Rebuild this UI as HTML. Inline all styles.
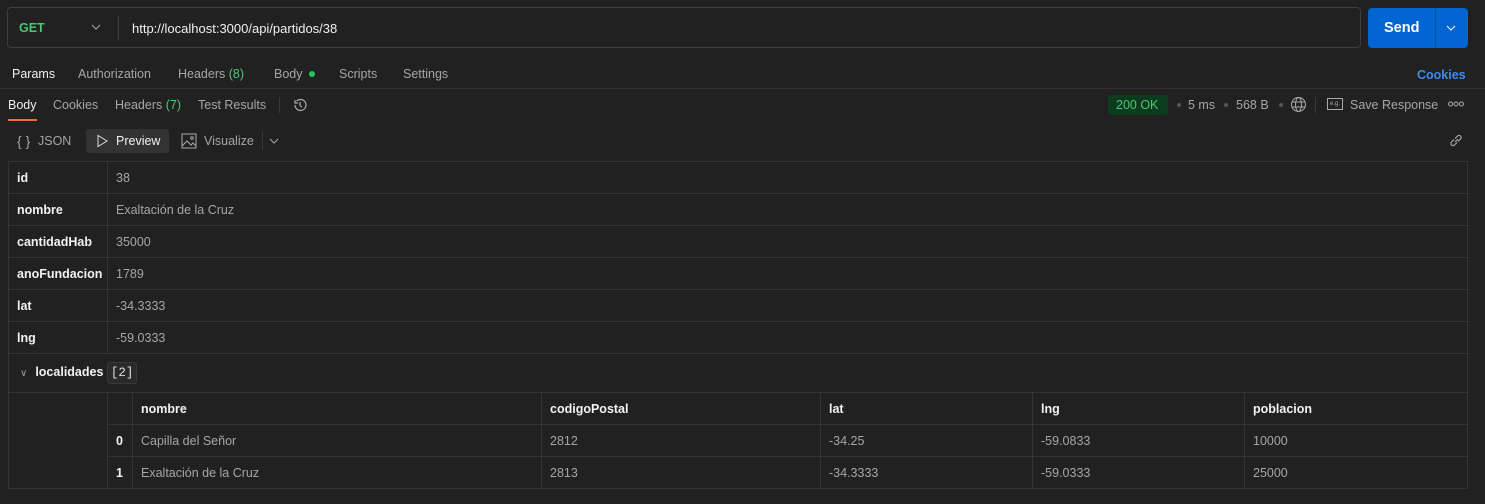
<!DOCTYPE html>
<html><head><meta charset="utf-8"><style>
*{box-sizing:border-box;margin:0;padding:0}
body{width:1485px;height:504px;background:#212121;font-family:"Liberation Sans",sans-serif;font-size:12.5px;color:#a6a6a6;position:relative;overflow:hidden}
.a{position:absolute;white-space:nowrap}
.w{color:#f0f0f0}
.b{font-weight:bold;color:#f2f2f2}
.g{color:#4ec473}
table{border-collapse:collapse;position:absolute;table-layout:fixed}
td{border:1px solid #343434;padding:0 8px;height:32px;white-space:nowrap;overflow:hidden}
</style></head><body>
<div class="a" style="left:7px;top:7px;width:1354px;height:41px;border:1px solid #3f3f3f;border-radius:4px"></div>
<div class="a b" style="left:19px;top:21px;color:#4ec473;font-size:12.5px">GET</div>
<svg class="a" style="left:91px;top:23px" width="10" height="8"><path d="M1 2l4 4 4-4" stroke="#aaa" fill="none"/></svg>
<div class="a" style="left:118px;top:16px;width:1px;height:24px;background:#3f3f3f"></div>
<div class="a w" style="left:132px;top:21px;font-size:13px">http://localhost:3000/api/partidos/38</div>
<div class="a" style="left:1368px;top:8px;width:100px;height:40px;background:#0265d2;border-radius:4px"></div>
<div class="a" style="left:1435px;top:8px;width:1px;height:40px;background:#0b4f9c"></div>
<div class="a" style="left:1384px;top:20px;color:#fff;font-weight:bold;font-size:14.5px">Send</div>
<svg class="a" style="left:1446px;top:24px" width="10" height="8"><path d="M1 2l4 4 4-4" stroke="#fff" fill="none"/></svg>

<div class="a w" style="left:12px;top:67px">Params</div>
<div class="a" style="left:78px;top:67px">Authorization</div>
<div class="a" style="left:178px;top:67px">Headers <span class="g">(8)</span></div>
<div class="a" style="left:274px;top:67px">Body</div>
<div class="a" style="left:309px;top:71px;width:6px;height:6px;border-radius:50%;background:#27c45c"></div>
<div class="a" style="left:339px;top:67px">Scripts</div>
<div class="a" style="left:403px;top:67px">Settings</div>
<div class="a" style="left:1417px;top:68px;color:#3d8cf0;font-weight:bold">Cookies</div>
<div class="a" style="left:0;top:88px;width:1485px;height:1px;background:#303030"></div>

<div class="a w" style="left:8px;top:98px">Body</div>
<div class="a" style="left:8px;top:119px;width:29px;height:2px;background:#f26b3a"></div>
<div class="a" style="left:53px;top:98px">Cookies</div>
<div class="a" style="left:115px;top:98px">Headers <span class="g">(7)</span></div>
<div class="a" style="left:198px;top:98px">Test Results</div>
<div class="a" style="left:279px;top:97px;width:1px;height:16px;background:#3a3a3a"></div>
<svg class="a" style="left:292px;top:97px" width="16" height="16"><path d="M3 8a5.5 5.5 0 1 0 1.6-3.9M3 3v3h3M8 5v3.5l2 1.5" stroke="#aaa" fill="none" stroke-width="1.2"/></svg>
<div class="a" style="left:1108px;top:95px;width:60px;height:20px;background:#0c3b1e;border-radius:3px"></div>
<div class="a" style="left:1116px;top:98px;color:#4ec473">200 OK</div>
<div class="a" style="left:1177px;top:103px;width:4px;height:4px;border-radius:50%;background:#555"></div>
<div class="a" style="left:1188px;top:98px">5 ms</div>
<div class="a" style="left:1224px;top:103px;width:4px;height:4px;border-radius:50%;background:#555"></div>
<div class="a" style="left:1236px;top:98px">568 B</div>
<div class="a" style="left:1279px;top:103px;width:4px;height:4px;border-radius:50%;background:#555"></div>
<svg class="a" style="left:1290px;top:96px" width="17" height="17"><circle cx="8.5" cy="8.5" r="7" stroke="#aaa" fill="none"/><ellipse cx="8.5" cy="8.5" rx="3" ry="7" stroke="#aaa" fill="none"/><path d="M1.5 6h14M1.5 11h14" stroke="#aaa"/></svg>
<div class="a" style="left:1315px;top:97px;width:1px;height:16px;background:#3a3a3a"></div>
<div class="a" style="left:1327px;top:98px;width:16px;height:12px;border:1px solid #aaa;font-size:6px;color:#aaa;text-align:center;line-height:10px">e.g.</div>
<div class="a" style="left:1350px;top:98px">Save Response</div>
<svg class="a" style="left:1448px;top:101px" width="16" height="6"><circle cx="2.5" cy="3" r="2" stroke="#aaa" fill="none"/><circle cx="8" cy="3" r="2" stroke="#aaa" fill="none"/><circle cx="13.5" cy="3" r="2" stroke="#aaa" fill="none"/></svg>

<div class="a" style="left:17px;top:133px;font-size:14px">{ }</div>
<div class="a" style="left:38px;top:134px">JSON</div>
<div class="a" style="left:86px;top:129px;width:83px;height:24px;background:#333;border-radius:3px"></div>
<svg class="a" style="left:96px;top:134px" width="12" height="14"><path d="M2 1.5v11l9-5.5z" stroke="#ddd" fill="none"/></svg>
<div class="a w" style="left:116px;top:134px">Preview</div>
<svg class="a" style="left:181px;top:133px" width="16" height="16"><rect x="1" y="1" width="14" height="14" stroke="#aaa" fill="none"/><path d="M1 13l5-5 4 4 2-2 3 3" stroke="#aaa" fill="none"/><circle cx="11" cy="5" r="1.3" stroke="#aaa" fill="none"/></svg>
<div class="a" style="left:204px;top:134px">Visualize</div>
<div class="a" style="left:262px;top:132px;width:1px;height:18px;background:#3a3a3a"></div>
<svg class="a" style="left:269px;top:137px" width="10" height="8"><path d="M1 2l4 4 4-4" stroke="#aaa" fill="none"/></svg>
<svg class="a" style="left:1448px;top:133px" width="16" height="16"><path d="M7 9l3-3M6 6.5l-2.5 2.5a2.1 2.1 0 0 0 3 3L9 9.5M7 5.5l2.5-2.5a2.1 2.1 0 0 1 3 3L10 8.5" stroke="#aaa" fill="none" stroke-width="1.2"/></svg>

<table style="left:8px;top:161px;width:1460px">
<colgroup><col style="width:99px"><col></colgroup>
<tr><td class="b">id</td><td>38</td></tr>
<tr><td class="b">nombre</td><td>Exaltación de la Cruz</td></tr>
<tr><td class="b">cantidadHab</td><td>35000</td></tr>
<tr><td class="b">anoFundacion</td><td>1789</td></tr>
<tr><td class="b">lat</td><td>-34.3333</td></tr>
<tr><td class="b">lng</td><td>-59.0333</td></tr>
<tr><td colspan="2" style="height:39px"><span style="color:#999;font-size:10px;margin-left:3px">&#8744;</span><span class="b" style="margin-left:8px">localidades</span> <span style="display:inline-block;border:1px solid #3a3a3a;background:#2a2a2a;border-radius:3px;padding:3px 3px;color:#ddd;font-family:'Liberation Mono',monospace">[2]</span></td></tr>
</table>
<table style="left:107px;top:392px;width:1361px">
<colgroup><col style="width:25px"><col style="width:409px"><col style="width:279px"><col style="width:212px"><col style="width:212px"><col></colgroup>
<tr><td></td><td class="b">nombre</td><td class="b">codigoPostal</td><td class="b">lat</td><td class="b">lng</td><td class="b">poblacion</td></tr>
<tr><td class="b">0</td><td>Capilla del Señor</td><td>2812</td><td>-34.25</td><td>-59.0833</td><td>10000</td></tr>
<tr><td class="b">1</td><td>Exaltación de la Cruz</td><td>2813</td><td>-34.3333</td><td>-59.0333</td><td>25000</td></tr>
</table>
<div class="a" style="left:8px;top:392px;width:1px;height:97px;background:#343434"></div>
<div class="a" style="left:8px;top:488px;width:100px;height:1px;background:#343434"></div>
</body></html>
